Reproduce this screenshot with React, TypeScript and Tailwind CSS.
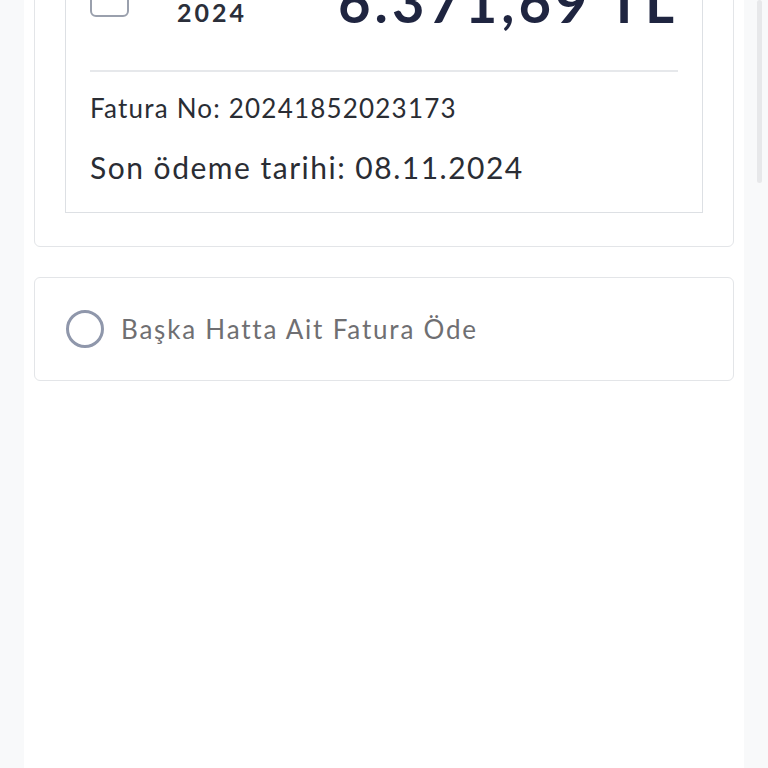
export default function App() {
  return (
    <div
      className="flex h-[768px] overflow-hidden bg-[#f8f9fa]"
      style={{ fontFamily: "Lato, 'Open Sans', sans-serif" }}
    >
      {/* left gutter */}
      <div className="w-[24px] shrink-0" />

      {/* main column */}
      <div className="w-[720px] shrink-0 bg-white px-[10px]">
        {/* selected bill card (scrolled, top cut off) */}
        <div className="-mt-[78px] rounded-md border border-[#e3e5e8] bg-white px-[30px] pt-[30px] pb-[33px]">
          <div className="border border-[#dde0e4] pt-[20px] pr-[24px] pb-[27px] pl-[24px]">
            <div className="flex">
              <div className="mb-[13px] h-[39px] w-[39px] self-end rounded-md border-2 border-[#9aa0ad] bg-white" />
              <div className="ml-[48px] mb-[5px] self-end text-[25px] leading-[25px] font-bold tracking-[3px] text-[#2b2f3a]">
                2024
              </div>
              <div className="ml-auto self-end text-[56px] leading-none font-bold tracking-[4px] text-[#1f2540]">
                6.371,69 TL
              </div>
            </div>
            <div className="mt-[40px] h-[2px] bg-[#e6e8eb]" />
            <div className="mt-[20px] text-[26px] leading-[32px] tracking-[1.2px] text-[#2a2d34]">
              Fatura No: 20241852023173
            </div>
            <div className="mt-[25px] text-[30px] leading-[36px] tracking-[1.5px] text-[#2a2d34]">
              Son ödeme tarihi: 08.11.2024
            </div>
          </div>
        </div>

        {/* other line option */}
        <div className="mt-[30px] flex h-[104px] items-center rounded-md border border-[#e3e5e8] bg-white pl-[31px]">
          <div className="h-[38px] w-[38px] shrink-0 rounded-full border-[3px] border-[#8f97ab]" />
          <span className="ml-[17px] text-[26px] tracking-[1.8px] text-[#6f6f72]">
            Başka Hatta Ait Fatura Öde
          </span>
        </div>
      </div>

      {/* right gutter with scrollbar */}
      <div className="w-[24px] shrink-0">
        <div className="ml-[13px] h-[183px] w-[5px] rounded-full bg-[#e7e8ea]" />
      </div>
    </div>
  );
}
